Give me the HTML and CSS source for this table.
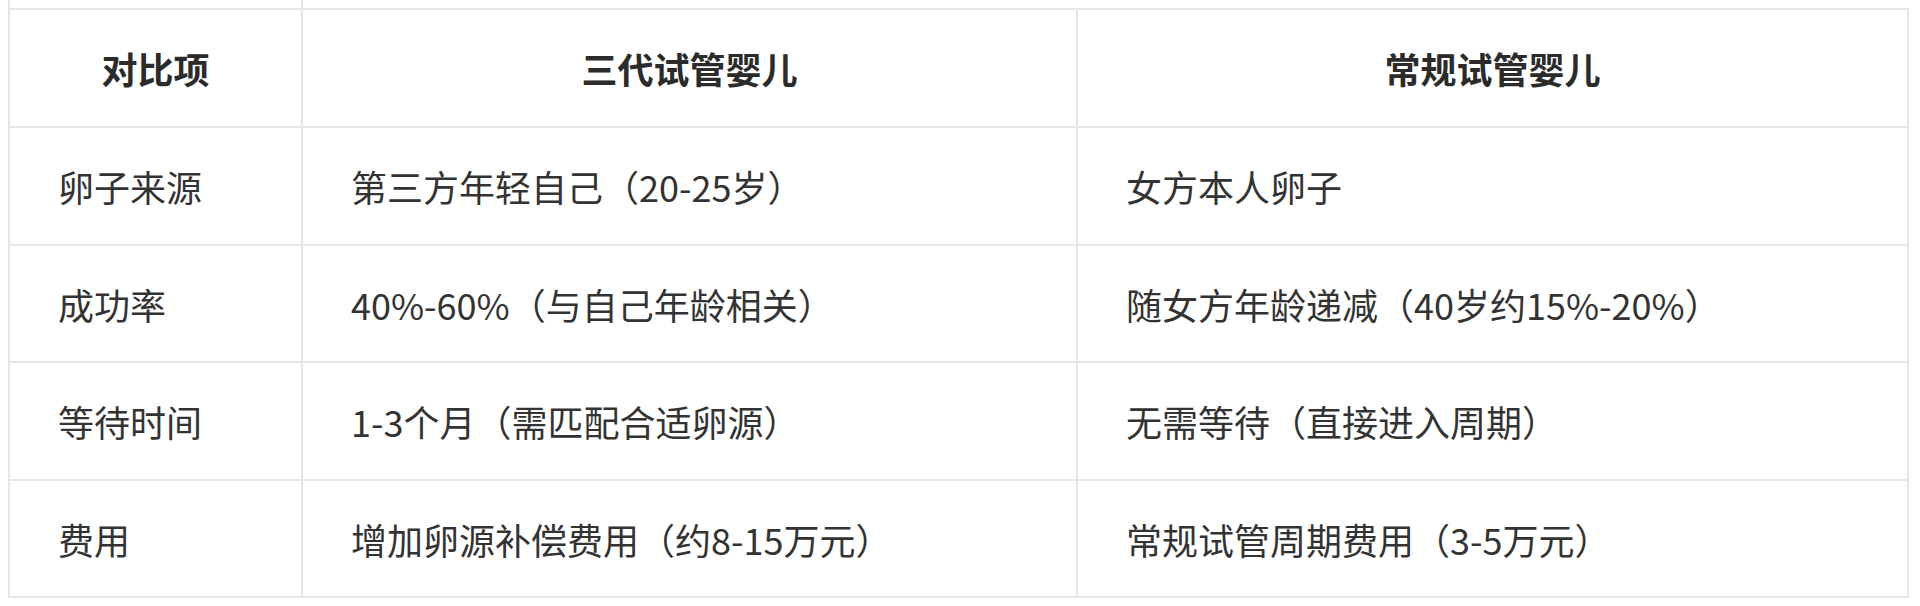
FILE: index.html
```html
<!DOCTYPE html>
<html lang="zh-CN">
<head>
<meta charset="utf-8">
<title>对比</title>
<link rel="stylesheet" href="styles.css">
</head>
<body>
<div class="page">
  <div class="prev-row"></div>
  <div class="table">
    <div class="cell head">对比项</div>
    <div class="cell head">三代试管婴儿</div>
    <div class="cell head">常规试管婴儿</div>

    <div class="cell">卵子来源</div>
    <div class="cell">第三方年轻自己（20-25岁）</div>
    <div class="cell">女方本人卵子</div>

    <div class="cell">成功率</div>
    <div class="cell">40%-60%（与自己年龄相关）</div>
    <div class="cell">随女方年龄递减（40岁约15%-20%）</div>

    <div class="cell">等待时间</div>
    <div class="cell">1-3个月（需匹配合适卵源）</div>
    <div class="cell">无需等待（直接进入周期）</div>

    <div class="cell">费用</div>
    <div class="cell">增加卵源补偿费用（约8-15万元）</div>
    <div class="cell">常规试管周期费用（3-5万元）</div>
  </div>
</div>
</body>
</html>
```

FILE: styles.css
```css
html, body {
  margin: 0;
  padding: 0;
  background: #ffffff;
}

.page {
  padding: 0 11px 0 8px;
  font-family: "Noto Sans CJK SC", "Microsoft YaHei", "Noto Sans", sans-serif;
  color: #333333;
}

.prev-row {
  width: 291px;
  height: 8px;
  border-left: 2px solid #e6e6e6;
  border-right: 2px solid #e6e6e6;
}

.table {
  display: grid;
  grid-template-columns: 293px 775px 1fr;
  grid-template-rows: 118px 118px 117px 118px 117px;
  border-top: 2px solid #e6e6e6;
  border-left: 2px solid #e6e6e6;
}

.cell {
  display: flex;
  align-items: center;
  padding-left: 48px;
  font-size: 36px;
  line-height: 1;
  border-right: 2px solid #e6e6e6;
  border-bottom: 2px solid #e6e6e6;
  white-space: nowrap;
}

.head {
  justify-content: center;
  padding-left: 0;
  font-weight: 700;
  color: #2b2b2b;
}
```
